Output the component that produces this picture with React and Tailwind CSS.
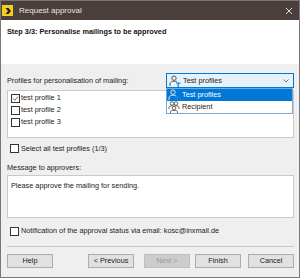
import React from 'react';

function Check({ checked }) {
  return (
    <span className="w-[9px] h-[9px] border border-[#333] bg-white flex items-center justify-center shrink-0">
      {checked && (
        <svg width="7" height="7" viewBox="0 0 7 7">
          <path d="M1 3.5 L2.8 5.3 L6 1.5" stroke="#555" strokeWidth="0.9" fill="none" />
        </svg>
      )}
    </span>
  );
}

function TestProfileIcon({ light }) {
  const c = light ? '#dfe6ee' : '#555';
  return (
    <svg width="12" height="12" viewBox="0 0 12 12" className="shrink-0">
      <circle cx="5" cy="3.2" r="2.2" stroke={c} strokeWidth="1" fill="none" />
      <path d="M1 11 V9 C1 7 3 6.2 5 6.2 C6.5 6.2 7.5 6.6 8 7" stroke={c} strokeWidth="1" fill="none" />
      <path d="M7 8.2 H11.5 M9.25 8.2 V12" stroke="#1e88d8" strokeWidth="1.3" fill="none" />
    </svg>
  );
}

function RecipientIcon() {
  return (
    <svg width="12" height="12" viewBox="0 0 12 12" className="shrink-0">
      <circle cx="4" cy="2.5" r="1.8" stroke="#555" strokeWidth="0.9" fill="none" />
      <circle cx="8" cy="2.5" r="1.8" stroke="#555" strokeWidth="0.9" fill="none" />
      <path d="M1 8 V6.5 C1 5.3 2.5 4.8 4 4.8 C5.5 4.8 6 5.3 6 5.3 C6 5.3 6.5 4.8 8 4.8 C9.5 4.8 11 5.3 11 6.5 V8" stroke="#555" strokeWidth="0.9" fill="none" />
      <circle cx="6" cy="7.2" r="1.8" stroke="#555" strokeWidth="0.9" fill="white" />
      <path d="M2.5 12 V10.8 C2.5 9.8 4 9.3 6 9.3 C8 9.3 9.5 9.8 9.5 10.8 V12" stroke="#555" strokeWidth="0.9" fill="none" />
    </svg>
  );
}

function Btn({ children, disabled }) {
  return (
    <button
      className={
        'w-[46px] h-[14px] border flex items-center justify-center ' +
        (disabled
          ? 'bg-[#cccccc] border-[#bfbfbf] text-[#9a9a9a]'
          : 'bg-[#e1e1e1] border-[#adadad] text-[#222]')
      }
    >
      {children}
    </button>
  );
}

export default function App() {
  return (
    <div
      className="w-[300px] h-[278px] border border-[#7b7575] flex flex-col bg-[#efefef] text-[7.3px] text-[#222] leading-none overflow-hidden"
      style={{ fontFamily: '"Liberation Sans", Arial, sans-serif' }}
    >
      <div className="h-[19px] bg-[#4b3f3b] flex items-center pl-[1px] pr-[6px] shrink-0">
        <span className="w-[11px] h-[11px] bg-[#f2cf1d] flex items-center justify-center">
          <svg width="8" height="8" viewBox="0 0 8 8">
            <path d="M1.5 1 H4.5 L7 4 L4.5 7 H1.5 L4 4 Z" fill="#222" />
          </svg>
        </span>
        <span className="ml-[6px] text-[8px] text-[#e9e6e4]">Request approval</span>
        <svg width="8" height="8" viewBox="0 0 8 8" className="ml-auto">
          <path d="M1 1 L7 7 M7 1 L1 7" stroke="#dcd8d6" strokeWidth="1" />
        </svg>
      </div>

      <div className="h-[44px] bg-white px-[6px] pt-[8px] shrink-0">
        <div className="font-bold text-[#111]">Step 3/3: Personalise mailings to be approved</div>
      </div>

      <div className="flex-1 flex flex-col pl-[6px] pr-[5px]">
        <div className="relative mt-[9px] h-[15px] flex items-center">
          <span>Profiles for personalisation of mailing:</span>
          <div className="absolute left-[159px] top-0 w-[128px] z-10">
            <div className="h-[15px] border border-[#0078d7] bg-[#e5f1fb] flex items-center pl-[2px] pr-[4px] gap-[2px]">
              <TestProfileIcon />
              <span>Test profiles</span>
              <svg width="6" height="4" viewBox="0 0 6 4" className="ml-auto">
                <path d="M0.5 0.5 L3 3 L5.5 0.5" stroke="#555" strokeWidth="0.8" fill="none" />
              </svg>
            </div>
            <div className="border border-[#7aa9d8] bg-white w-[127px]">
              <div className="h-[12px] bg-[#0078d7] text-white flex items-center pl-[1px] gap-[2px]">
                <TestProfileIcon light />
                <span>Test profiles</span>
              </div>
              <div className="h-[12px] flex items-center pl-[1px] gap-[2px]">
                <RecipientIcon />
                <span>Recipient</span>
              </div>
            </div>
          </div>
        </div>

        <div className="mt-[2px] h-[48px] bg-white border border-[#c9c9c9] pl-[3px] pt-[1px] flex flex-col">
          {['test profile 1', 'test profile 2', 'test profile 3'].map((t, i) => (
            <div key={t} className="h-[12px] flex items-center gap-[1px]">
              <Check checked={i === 0} />
              <span>{t}</span>
            </div>
          ))}
        </div>

        <div className="mt-[5px] h-[11px] flex items-center gap-[2px] pl-[3px]">
          <Check />
          <span>Select all test profiles (1/3)</span>
        </div>

        <div className="mt-[9px] h-[9px] flex items-center">Message to approvers:</div>

        <div className="mt-[3px] h-[43px] bg-white border border-[#c9c9c9] px-[3px] pt-[6px]">
          Please approve the mailing for sending.
        </div>

        <div className="mt-[8px] h-[10px] flex items-center gap-[2px] pl-[3px]">
          <Check />
          <span>Notification of the approval status via email: kosc@inxmail.de</span>
        </div>

        <div className="mt-[10px] h-px bg-[#c8c8c8]" />

        <div className="mt-[7px] flex items-center">
          <Btn>Help</Btn>
          <div className="ml-auto flex items-center">
            <Btn>&lt; Previous</Btn>
            <div className="ml-[10px]">
              <Btn disabled>Next &gt;</Btn>
            </div>
            <div className="ml-[5px]">
              <Btn>Finish</Btn>
            </div>
            <div className="ml-[7px]">
              <Btn>Cancel</Btn>
            </div>
          </div>
        </div>
      </div>
    </div>
  );
}
